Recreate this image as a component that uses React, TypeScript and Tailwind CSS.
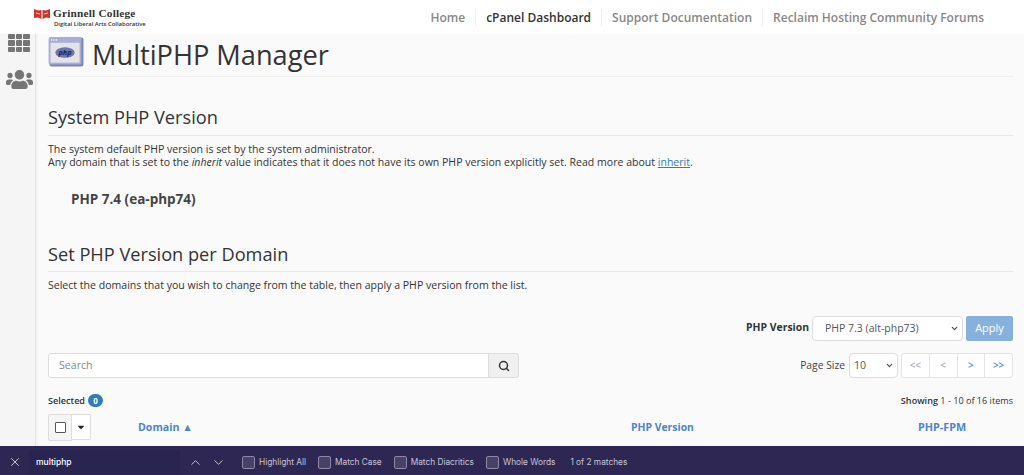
import { ChevronDown, ChevronUp, Search, X } from "lucide-react";
import { FaCaretDown, FaUsers } from "react-icons/fa";

const navLinks = [
  { label: "Home", active: false },
  { label: "cPanel Dashboard", active: true },
  { label: "Support Documentation", active: false },
  { label: "Reclaim Hosting Community Forums", active: false },
];

const findOptions = ["Match Case", "Match Diacritics", "Whole Words"];
const pager = [
  { label: "<<", on: false },
  { label: "<", on: false },
  { label: ">", on: true },
  { label: ">>", on: true },
];

function Logo() {
  return (
    <div className="flex items-start ml-[34px] mt-[7px]">
      <svg width="16" height="10" viewBox="0 0 16 10" className="mt-[2px]">
        <path d="M0 0 L4 1.5 L7.5 1 V10 L4 8.5 L0 9 Z M16 0 L12 1.5 L8.5 1 V10 L12 8.5 L16 9 Z" fill="#c8362e" />
        <path d="M2 4 L6 5 M14 4 L10 5" stroke="#fff" strokeWidth="0.8" />
      </svg>
      <div className="ml-[3px]">
        <div className="font-['Liberation_Serif',serif] font-bold text-[11.3px] leading-[13px] text-[#333] tracking-[0.2px]">
          Grinnell College
        </div>
        <div className="font-['Open_Sans',sans-serif] font-semibold text-[5.9px] leading-[7px] ml-[1px] mt-[1px] text-[#333]">
          Digital Liberal Arts Collaborative
        </div>
      </div>
    </div>
  );
}

function PhpIcon() {
  return (
    <svg width="36" height="30" viewBox="0 0 36 31" className="shrink-0 mt-[2px]">
      <rect x="1" y="0.5" width="35" height="30" rx="2" fill="#7a82b8" />
      <rect x="0" y="0" width="34" height="28.5" rx="2" fill="#a9aed6" />
      <circle cx="3" cy="3" r="0.8" fill="#fff" />
      <circle cx="5.5" cy="3" r="0.8" fill="#fff" />
      <circle cx="8" cy="3" r="0.8" fill="#fff" />
      <rect x="2" y="6" width="30" height="20.5" fill="#e4e4e6" />
      <ellipse cx="17" cy="16" rx="10" ry="5.5" fill="#6b74b4" />
      <text x="17" y="18.5" textAnchor="middle" fontSize="7.5" fontStyle="italic" fontWeight="700" fill="#20253f" fontFamily="Open Sans, sans-serif">php</text>
    </svg>
  );
}

export default function App() {
  return (
    <div className="flex flex-col h-[475px] w-[1024px] overflow-hidden bg-[#fafafa] font-['Open_Sans',sans-serif] text-[#333]">
      <header className="h-[34px] shrink-0 bg-white flex justify-between">
        <Logo />
        <nav className="flex items-center pr-[30px] h-[34px]">
          {navLinks.map((link, i) => (
            <a
              key={link.label}
              className={`text-[12px] font-semibold leading-[17px] px-[10px] ${
                i > 0 ? "border-l border-[#eee]" : ""
              } ${link.active ? "text-[#333]" : "text-[#888]"}`}
            >
              {link.label}
            </a>
          ))}
        </nav>
      </header>

      <div className="flex flex-1 min-h-0">
        <aside className="w-[36px] shrink-0 bg-[#f5f5f5] border-r border-[#e6e6e6] shadow-[1px_0_2px_rgba(0,0,0,0.06)] flex flex-col items-center">
          <div className="grid grid-cols-3 gap-[1px] w-[22px] h-[18px] ml-[3px]">
            {Array.from({ length: 9 }).map((_, i) => (
              <span key={i} className="bg-[#757575] rounded-[1px]" />
            ))}
          </div>
          <FaUsers className="text-[#757575] mt-[14px] ml-[4px] text-[27px]" />
        </aside>

        <main className="flex-1 min-w-0 pl-[12px] pr-[11px]">
          <div className="flex items-start gap-[8px] h-[42px] mt-[1px] border-b border-[#eee]">
            <PhpIcon />
            <h1 className="text-[27.2px] leading-[40px] text-[#333]">MultiPHP Manager</h1>
          </div>

          <h2 className="text-[18.2px] leading-[27px] mt-[27px] pb-[4px] border-b border-[#e8e8e8]">System PHP Version</h2>
          <p className="text-[10.55px] leading-[13px] mt-[7px]">
            The system default PHP version is set by the system administrator.
            <br />
            Any domain that is set to the <em>inherit</em> value indicates that it does not have its own PHP version explicitly set. Read more about{" "}
            <a className="text-[#337ab7] underline">inherit</a>.
          </p>
          <div className="text-[13.5px] font-bold leading-[19px] text-[#444] ml-[23px] mt-[21px]">PHP 7.4 (ea-php74)</div>

          <h2 className="text-[18.2px] leading-[27px] mt-[32px] pb-[3px] border-b border-[#e8e8e8]">Set PHP Version per Domain</h2>
          <p className="text-[10.55px] leading-[13px] mt-[7px]">
            Select the domains that you wish to change from the table, then apply a PHP version from the list.
          </p>

          <div className="flex justify-end items-center mt-[24px] h-[25px]">
            <span className="text-[10.4px] font-bold mr-[3px] mb-[1px]">PHP Version</span>
            <div className="w-[151px] h-[25px] bg-white border border-[#ddd] rounded-[4px] flex items-center justify-between pl-[12px] pr-[3px] text-[10.5px] text-[#555]">
              PHP 7.3 (alt-php73)
              <ChevronDown className="w-[9px] h-[9px] text-[#444]" strokeWidth={3} />
            </div>
            <button className="w-[47px] h-[25px] ml-[3px] bg-[#87b0dc] rounded-[2px] text-white text-[11px]">Apply</button>
          </div>

          <div className="flex items-center mt-[12px] h-[25px]">
            <div className="w-[471px] h-[25px] flex shrink-0">
              <div className="flex-1 bg-white border border-[#ddd] rounded-l-[3px] text-[10.6px] text-[#888] pl-[10px] leading-[23px]">Search</div>
              <div className="w-[30px] bg-[#f0f0f0] border border-l-0 border-[#ddd] rounded-r-[3px] flex items-center justify-center">
                <Search className="w-[12px] h-[12px] text-[#333]" strokeWidth={3} />
              </div>
            </div>
            <span className="ml-auto text-[10.3px] text-[#444] mr-[4px]">Page Size</span>
            <div className="w-[49px] h-[25px] bg-white border border-[#ddd] rounded-[4px] flex items-center justify-between pl-[4px] pr-[3px] text-[10.6px] text-[#555]">
              10
              <ChevronDown className="w-[9px] h-[9px] text-[#444]" strokeWidth={3} />
            </div>
            <div className="flex ml-[3px] h-[25px] w-[112px] bg-white border border-[#e4e4e4] rounded-[3px]">
              {pager.map((p, i) => (
                <span
                  key={p.label}
                  className={`flex-1 flex items-center justify-center text-[10px] font-semibold ${i > 0 ? "border-l border-[#e4e4e4]" : ""} ${p.on ? "text-[#4a86c8]" : "text-[#aaa]"}`}
                >
                  {p.label}
                </span>
              ))}
            </div>
          </div>

          <div className="flex justify-between items-center mt-[15px] h-[16px] text-[9.1px]">
            <div className="flex items-center gap-[3px] font-semibold">
              Selected
              <span className="w-[15px] h-[13px] rounded-full bg-[#337ab7] text-white text-center font-bold text-[8px] leading-[13px]">0</span>
            </div>
            <div>
              <b className="font-semibold">Showing</b> 1 - 10 of 16 items
            </div>
          </div>

          <div className="flex items-center h-[38px] border-b border-[#ccc]">
            <div className="flex shrink-0 w-[43px] h-[27px]">
              <div className="w-[24px] h-[27px] bg-[#f5f5f5] border border-[#ddd] rounded-l-[2px] flex items-center justify-center">
                <span className="w-[11px] h-[11px] border border-[#555] rounded-[1px] bg-white" />
              </div>
              <div className="w-[19px] h-[26px] bg-white border border-l-0 border-[#ddd] rounded-r-[2px] flex items-center justify-center">
                <FaCaretDown className="text-[10px] text-[#222]" />
              </div>
            </div>
            <div className="ml-[47px] w-[493px] shrink-0 text-[10.6px] font-bold text-[#4a86c8]">Domain ▲</div>
            <div className="w-[287px] shrink-0 text-[10.4px] font-bold text-[#4a86c8]">PHP Version</div>
            <div className="text-[10.8px] font-bold text-[#4a86c8]">PHP-FPM</div>
          </div>
        </main>
      </div>

      <footer className="h-[29px] shrink-0 bg-[#2e2754] flex items-center pt-[3px] text-[#c9c6d6] text-[8.3px] font-['Inter',sans-serif]">
        <X className="w-[14px] h-[14px] ml-[8px] text-[#ddd]" strokeWidth={1.5} />
        <div className="ml-[7px] w-[151px] h-[24px] bg-[#2a2450] pl-[7px] leading-[24px] text-white font-medium text-[8.5px]">multiphp</div>
        <ChevronUp className="w-[15px] h-[15px] ml-[8px] text-[#ccc]" strokeWidth={1.5} />
        <ChevronDown className="w-[15px] h-[15px] ml-[8px] text-[#ccc]" strokeWidth={1.5} />
        <span className="w-[13px] h-[13px] ml-[16px] border border-[#8d89a5] rounded-[2px] bg-[#48426b]" />
        <span className="ml-[4px]">Highlight All</span>
        {findOptions.map((opt) => (
          <div key={opt} className="flex items-center">
            <span className="w-[13px] h-[13px] ml-[12px] border border-[#8d89a5] rounded-[2px] bg-[#48426b]" />
            <span className="ml-[4px]">{opt}</span>
          </div>
        ))}
        <span className="ml-[15px]">1 of 2 matches</span>
      </footer>
    </div>
  );
}
